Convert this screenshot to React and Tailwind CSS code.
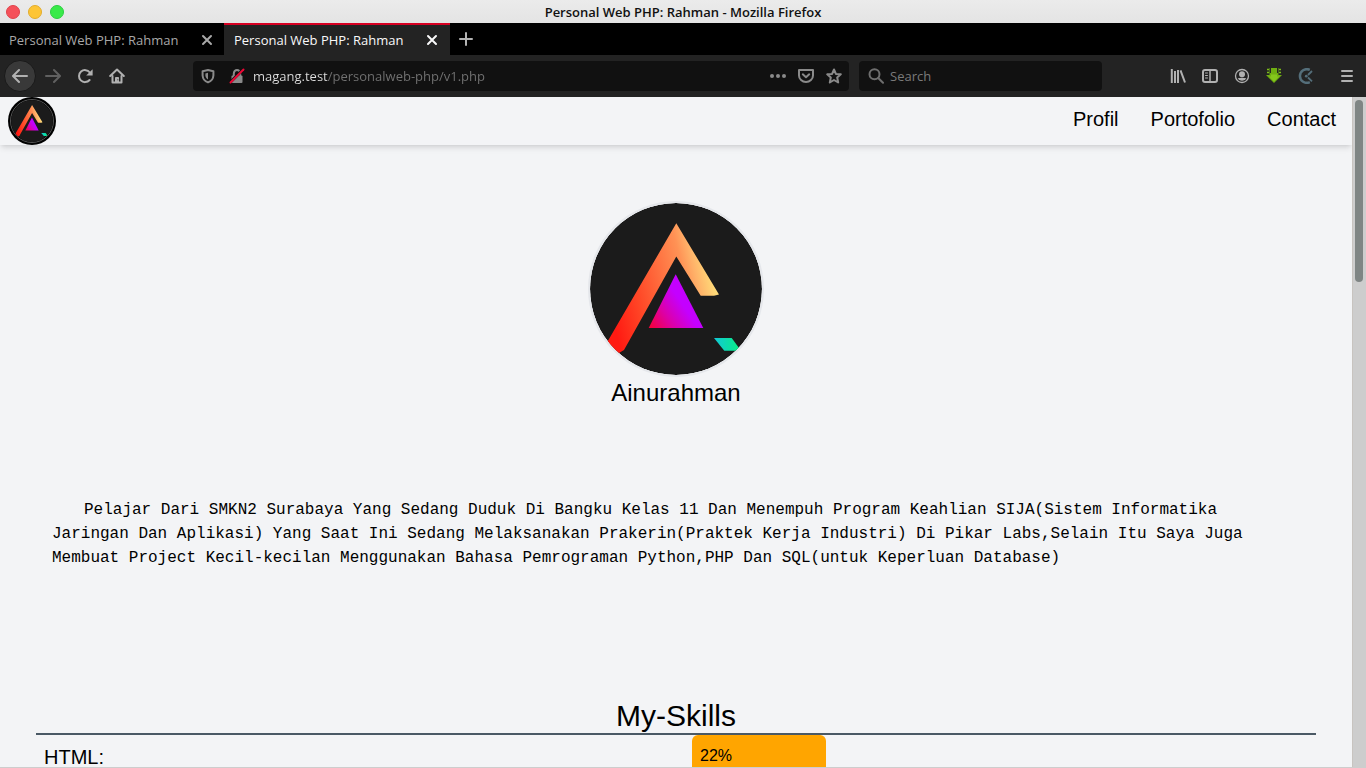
import React from "react";

const NAV_LINKS = ["Profil", "Portofolio", "Contact"];
const SKILLS = [{ name: "HTML", value: 22 }];

function Logo({ id, className }) {
  return (
    <svg viewBox="0 0 172 172" className={className} role="img" aria-label="Ainurahman logo">
      <defs>
        <linearGradient id={`${id}-arch`} gradientUnits="userSpaceOnUse" x1="25" y1="125" x2="128" y2="100">
          <stop offset="0" stopColor="#ff1a12" />
          <stop offset="0.3" stopColor="#ff4a28" />
          <stop offset="0.75" stopColor="#ff9255" />
          <stop offset="0.85" stopColor="#ffb068" />
          <stop offset="1" stopColor="#ffd978" />
        </linearGradient>
        <linearGradient id={`${id}-core`} gradientUnits="userSpaceOnUse" x1="60" y1="124" x2="93" y2="102">
          <stop offset="0" stopColor="#f5003c" />
          <stop offset="0.5" stopColor="#dc00a8" />
          <stop offset="1" stopColor="#c400ff" />
        </linearGradient>
        <linearGradient id={`${id}-chip`} x1="0" y1="0" x2="1" y2="0">
          <stop offset="0" stopColor="#12c8d8" />
          <stop offset="1" stopColor="#08f080" />
        </linearGradient>
        <clipPath id={`${id}-disc`}>
          <circle cx="86" cy="86" r="86" />
        </clipPath>
      </defs>
      <g clipPath={`url(#${id}-disc)`}>
        <circle cx="86" cy="86" r="86" fill="#1b1b1b" />
        <path d="M86.3 20.3 L129 91.5 L124 92.7 H110.7 L86.3 53.5 L34 147 L29 150 L12 148 Z" fill={`url(#${id}-arch)`} />
        <path d="M85.7 71.3 L113.3 125 H58.7 Z" fill={`url(#${id}-core)`} />
        <path d="M124 135 H141.7 L151 147.7 H134.3 Z" fill={`url(#${id}-chip)`} />
      </g>
    </svg>
  );
}

function Icon({ children, className = "size-4" }) {
  return (
    <svg viewBox="0 0 16 16" className={className} fill="none" stroke="currentColor" strokeWidth="2" strokeLinecap="round" strokeLinejoin="round" aria-hidden="true">
      {children}
    </svg>
  );
}

const icons = {
  back: <path d="M15 8H1.5M7 2L1 8l6 6" />,
  forward: <path d="M1 8h13.500M9 2l6 6-6 6" />,
  reload: (
    <>
      <path d="M12.600 12A6 6 0 1 1 12.800 4.500" />
      <path d="M15.600 1.300V7.500H9.200Z" fill="currentColor" stroke="none" />
    </>
  ),
  home: (
    <>
      <path d="M1.200 8L8 1.500L14.800 8" />
      <path d="M3.500 8V14.500H12.500V8" />
      <path d="M6.500 14V9.500H9.500V14Z" fill="currentColor" strokeWidth="1" />
      <path d="M8.800 11.800h.1" stroke="#232323" strokeWidth="1" />
    </>
  ),
  shield: (
    <>
      <path d="M8 2L13.400 3.300V7.500C13.200 11 11 13.400 8 14.400C5 13.400 2.800 11 2.600 7.500V3.300Z" />
      <path d="M8 4.800V11.600C6.400 10.500 5.400 9 5.400 7.200V5.400Z" fill="currentColor" stroke="none" />
    </>
  ),
  lock: (
    <>
      <path d="M4.800 8V5.500a3.200 3.500 0 0 1 6.400 0V8" />
      <rect x="2.500" y="7.500" width="11" height="7.500" rx="1" fill="currentColor" stroke="none" />
      <path d="M1 14.500L14.500 1" stroke="#111" strokeWidth="3" strokeLinecap="butt" />
      <path d="M1.500 14.500L14.500 1.500" stroke="#ee0836" strokeWidth="2" />
    </>
  ),
  dots: (
    <g fill="currentColor" stroke="none">
      <circle cx="2" cy="8" r="2" />
      <circle cx="8" cy="8" r="2" />
      <circle cx="14" cy="8" r="2" />
    </g>
  ),
  pocket: (
    <>
      <path d="M1 2H15V7.500A7 6.500 0 0 1 1 7.500Z" />
      <path d="M4.800 6.300L8 9.200L11.200 6.300" />
    </>
  ),
  star: <path d="M8 1.500L9.900 5.900L14.800 6.300L11.200 9.500L12.200 14.500L8 12L3.800 14.500L4.800 9.500L1.200 6.300L6.100 5.900Z" />,
  search: (
    <>
      <circle cx="6.500" cy="6.200" r="5" />
      <path d="M10.200 10L15 14.800" />
    </>
  ),
  library: (
    <g strokeLinecap="butt">
      <path d="M1.800 1v14M5 3v12M8 2v13M10.500 2.300L15 14.500" />
    </g>
  ),
  sidebar: (
    <>
      <rect x="1" y="2" width="14" height="12" rx="2" />
      <path d="M8 2.500v11" strokeWidth="1.500" />
      <path d="M3.500 5h2M3.500 7.500h2M3.500 10h2" strokeWidth="1" />
    </>
  ),
  account: (
    <>
      <circle cx="8" cy="8" r="6.500" strokeWidth="1.300" />
      <circle cx="8" cy="6.300" r="3" fill="currentColor" stroke="none" />
      <path d="M3.700 10.200C6 9.500 10 9.500 12.300 10.200A5 5 0 0 1 3.700 10.200Z" fill="currentColor" stroke="none" />
    </>
  ),
  download: (
    <g stroke="none">
      <path d="M3.500 0h9v7H16L8 15L0 7h3.500Z" fill="#6fae12" />
      <path d="M5 6.500h6v2h2L8 13.500L3 8.500h2Z" fill="#85c71c" />
      <path d="M4.500 0v5M11.500 0v5" stroke="#232323" strokeWidth="1" strokeLinecap="butt" />
      <path d="M1 1.500h2M1 4.500h2M13 1.500h2M13 4.500h2" stroke="#7dbd1a" strokeWidth="1.500" strokeLinecap="butt" />
    </g>
  ),
  clock: (
    <g stroke="#546e7a">
      <path d="M11.800 1.800A7 6.800 0 1 0 11.800 14.200" strokeWidth="2.500" strokeLinecap="butt" />
      <path d="M10 7L14 3M10 9.500L14 13.300" strokeWidth="1.800" strokeLinecap="butt" />
      <circle cx="8.300" cy="8.200" r="1.400" fill="#546e7a" stroke="none" />
    </g>
  ),
  menu: <path d="M3 3h10M3 8h10M3 13h10" />,
  close: <path d="M4 4l8 8M12 4l-8 8" />,
  plus: <path d="M8 2v12M2 8h12" />,
};

function ToolButton({ label, icon, className = "" }) {
  return (
    <button type="button" aria-label={label} className={`flex h-8 w-8 shrink-0 items-center justify-center ${className}`}>
      <Icon>{icons[icon]}</Icon>
    </button>
  );
}

function Tab({ title, active }) {
  return (
    <div
      className={
        active
          ? "flex w-[226px] items-center border-t-2 border-[#d70022] bg-[#232323] pl-[10px] pr-[10px] text-[#f9f9fa]"
          : "flex w-56 items-center border-t-2 border-transparent pl-[9px] pr-[9px] text-[#a8a8a8]"
      }
    >
      <button type="button" role="tab" aria-selected={active} className="flex-1 truncate pt-[2px] text-left">
        {title}
      </button>
      <button type="button" aria-label={`Close ${title}`}>
        <Icon>{icons.close}</Icon>
      </button>
    </div>
  );
}

function BrowserChrome() {
  return (
    <header className="shrink-0 font-['Open_Sans','Noto_Sans',sans-serif] text-[13px]">
      <div className="grid h-[23px] grid-cols-[1fr_auto_1fr] items-center bg-linear-to-b from-[#ebebeb] to-[#e4e4e4] px-[6px]">
        <div className="flex gap-2">
          <button type="button" aria-label="Close window" className="size-[14px] rounded-full border border-[#e0434b] bg-[#f5515a]" />
          <button type="button" aria-label="Minimize window" className="size-[14px] rounded-full border border-[#e2ac2c] bg-[#fdc536]" />
          <button type="button" aria-label="Maximize window" className="size-[14px] rounded-full border border-[#2bcf40] bg-[#39ea49]" />
        </div>
        <div className="pt-[2px] font-semibold text-[#111]">Personal Web PHP: Rahman - Mozilla Firefox</div>
      </div>
      <div role="tablist" className="flex h-8 bg-black">
        <Tab title="Personal Web PHP: Rahman" active={false} />
        <Tab title="Personal Web PHP: Rahman" active />
        <button type="button" aria-label="New tab" className="flex w-8 items-center justify-center text-[#b4b4b4]">
          <Icon>{icons.plus}</Icon>
        </button>
      </div>
      <div className="flex h-[42px] items-center bg-[#232323] pl-1 pr-[3px] text-[#b1b1b1]">
        <ToolButton label="Back" icon="back" className="rounded-full border border-[#1a1a1a] bg-[#393939]" />
        <ToolButton label="Forward" icon="forward" className="ml-px text-[#606060]" />
        <ToolButton label="Reload" icon="reload" />
        <ToolButton label="Home" icon="home" />
        <form className="ml-[60px] flex h-[30px] flex-1 items-center rounded bg-[#111] px-[7px] text-[#8a8a8a]">
          <Icon>{icons.shield}</Icon>
          <Icon className="ml-[13px] size-4">{icons.lock}</Icon>
          <input
            type="text"
            aria-label="Address"
            defaultValue="magang.test/personalweb-php/v1.php"
            className="ml-2 min-w-0 flex-1 bg-linear-to-r from-[#e0e0e0] from-[75px] to-[#727272] to-[75px] bg-clip-text pt-[2px] text-transparent outline-none"
          />
          <div className="flex gap-3">
            <button type="button" aria-label="Page actions"><Icon>{icons.dots}</Icon></button>
            <button type="button" aria-label="Save to Pocket"><Icon>{icons.pocket}</Icon></button>
            <button type="button" aria-label="Bookmark page"><Icon>{icons.star}</Icon></button>
          </div>
        </form>
        <form className="ml-[10px] flex h-[30px] w-[243px] items-center gap-[6px] rounded bg-[#111] px-[9px] text-[#6e6e6e]">
          <Icon>{icons.search}</Icon>
          <input type="text" aria-label="Search" placeholder="Search" className="min-w-0 flex-1 pt-[2px] outline-none placeholder:text-[#7a7a7a]" />
        </form>
        <div className="ml-[60px] flex">
          <ToolButton label="Library" icon="library" />
          <ToolButton label="Sidebars" icon="sidebar" />
          <ToolButton label="Account" icon="account" />
          <ToolButton label="Downloads" icon="download" />
          <ToolButton label="Time tracker" icon="clock" />
        </div>
        <ToolButton label="Menu" icon="menu" className="ml-[9px]" />
      </div>
    </header>
  );
}

function Skill({ name, value }) {
  return (
    <div className="grid grid-cols-2">
      <div className="p-2 text-xl">{name}:</div>
      <div className="px-4">
        <div className="rounded-md bg-[#ffa500] p-2 leading-[26px]" style={{ width: `${value}%` }}>
          {value}%
        </div>
      </div>
    </div>
  );
}

function PersonalPage() {
  return (
    <div className="min-w-0 flex-1 overflow-hidden bg-[#f3f4f6] font-['Liberation_Sans',Arial,sans-serif] text-black">
      <nav className="flex h-12 items-start justify-between pl-2 pr-4 shadow-md">
        <a href="#home" className="size-12 rounded-full bg-black p-[2px]">
          <Logo id="nav" className="size-full rounded-full border border-[#555]" />
        </a>
        <ul className="flex gap-8 pt-2 text-xl">
          {NAV_LINKS.map((link) => (
            <li key={link}>
              <a href={`#${link.toLowerCase()}`}>{link}</a>
            </li>
          ))}
        </ul>
      </nav>
      <main className="px-9">
        <section className="flex flex-col items-center pt-14">
          <Logo id="avatar" className="size-44 rounded-full border-2 border-[#e5e7eb]" />
          <h1 className="text-2xl">Ainurahman</h1>
        </section>
        <p className="mt-[89px] px-4 indent-8 font-['Liberation_Mono','Courier_New',monospace] text-base">
          Pelajar Dari SMKN2 Surabaya Yang Sedang Duduk Di Bangku Kelas 11 Dan Menempuh Program Keahlian SIJA(Sistem
          Informatika Jaringan Dan Aplikasi) Yang Saat Ini Sedang Melaksanakan Prakerin(Praktek Kerja Industri) Di Pikar
          Labs,Selain Itu Saya Juga Membuat Project Kecil-kecilan Menggunakan Bahasa Pemrograman Python,PHP Dan
          SQL(untuk Keperluan Database)
        </p>
        <section className="mt-[129px]">
          <h2 className="border-b-2 border-[#4a5965] text-center text-3xl leading-[34px]">My-Skills</h2>
          {SKILLS.map((skill) => (
            <Skill key={skill.name} {...skill} />
          ))}
        </section>
      </main>
    </div>
  );
}

export default function App() {
  return (
    <div className="flex h-screen flex-col overflow-hidden">
      <BrowserChrome />
      <div className="flex min-h-0 flex-1 border-b border-[#cdcdcd]">
        <PersonalPage />
        <div className="w-[14px] shrink-0 border-l border-[#c8c4c0] bg-[#cdcdcd] pl-[2px] pt-[3px]">
          <div className="h-[182px] w-2 rounded-full bg-[#7f8584]" />
        </div>
      </div>
    </div>
  );
}
